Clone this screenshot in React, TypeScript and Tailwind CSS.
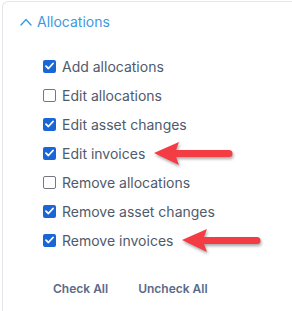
import React from 'react';

const perms = [
  { label: 'Add allocations', checked: true },
  { label: 'Edit allocations', checked: false },
  { label: 'Edit asset changes', checked: true },
  { label: 'Edit invoices', checked: true, arrow: true },
  { label: 'Remove allocations', checked: false },
  { label: 'Remove asset changes', checked: true },
  { label: 'Remove invoices', checked: true, arrow: true },
];

function Box({ checked }: { checked: boolean }) {
  if (checked) {
    return (
      <span className="flex h-[13px] w-[13px] shrink-0 items-center justify-center rounded-[2px] bg-[#1a66d6]">
        <svg width="9" height="8" viewBox="0 0 9 8" fill="none">
          <path d="M1 4.2 3.4 6.5 8 1.5" stroke="white" strokeWidth="1.8" strokeLinecap="round" strokeLinejoin="round" />
        </svg>
      </span>
    );
  }
  return <span className="h-[13px] w-[13px] shrink-0 rounded-[2px] border-[1.5px] border-[#767685] bg-white" />;
}

function Arrow() {
  return (
    <svg width="82" height="28" viewBox="0 0 82 28" className="drop-shadow-[1px_2px_1.5px_rgba(0,0,0,0.35)]">
      <path d="M1 13 L26 2 L23 10 L76 10 A3.5 3.5 0 0 1 76 17 L23 17 L26 25 Z" fill="#f43c45" />
    </svg>
  );
}

export default function App() {
  return (
    <div className="h-[311px] w-[292px] overflow-hidden bg-white pl-[2px] pt-[1px]" style={{ fontFamily: 'Inter, sans-serif' }}>
      <div className="h-[340px] w-[320px] rounded-tl-md border-l border-t border-[#e3e6ea]">
        {/* Header */}
        <div className="flex items-center gap-[5px] pl-[17px] pt-[9px] text-[14px] text-[#3d9ae0]">
          <svg width="12" height="8" viewBox="0 0 12 8" fill="none">
            <path d="M1 7 6 1.5 11 7" stroke="#3d9ae0" strokeWidth="1.4" strokeLinecap="round" />
          </svg>
          <span>Allocations</span>
        </div>

        {/* Checkbox list */}
        <div className="mt-[24px] flex flex-col gap-[9px] pl-[40px]">
          {perms.map((p) => (
            <div key={p.label} className="flex h-[20px] items-center gap-[6px] text-[14px] text-[#4f5a6b]">
              <Box checked={p.checked} />
              <span>{p.label}</span>
              {p.arrow && (
                <span className="ml-[2px] mt-[2px]">
                  <Arrow />
                </span>
              )}
            </div>
          ))}
        </div>

        {/* Actions */}
        <div className="mt-[30px] flex gap-[30px] pl-[50px] text-[12px] font-semibold text-[#5a6a89]">
          <button>Check All</button>
          <button>Uncheck All</button>
        </div>
      </div>
    </div>
  );
}
